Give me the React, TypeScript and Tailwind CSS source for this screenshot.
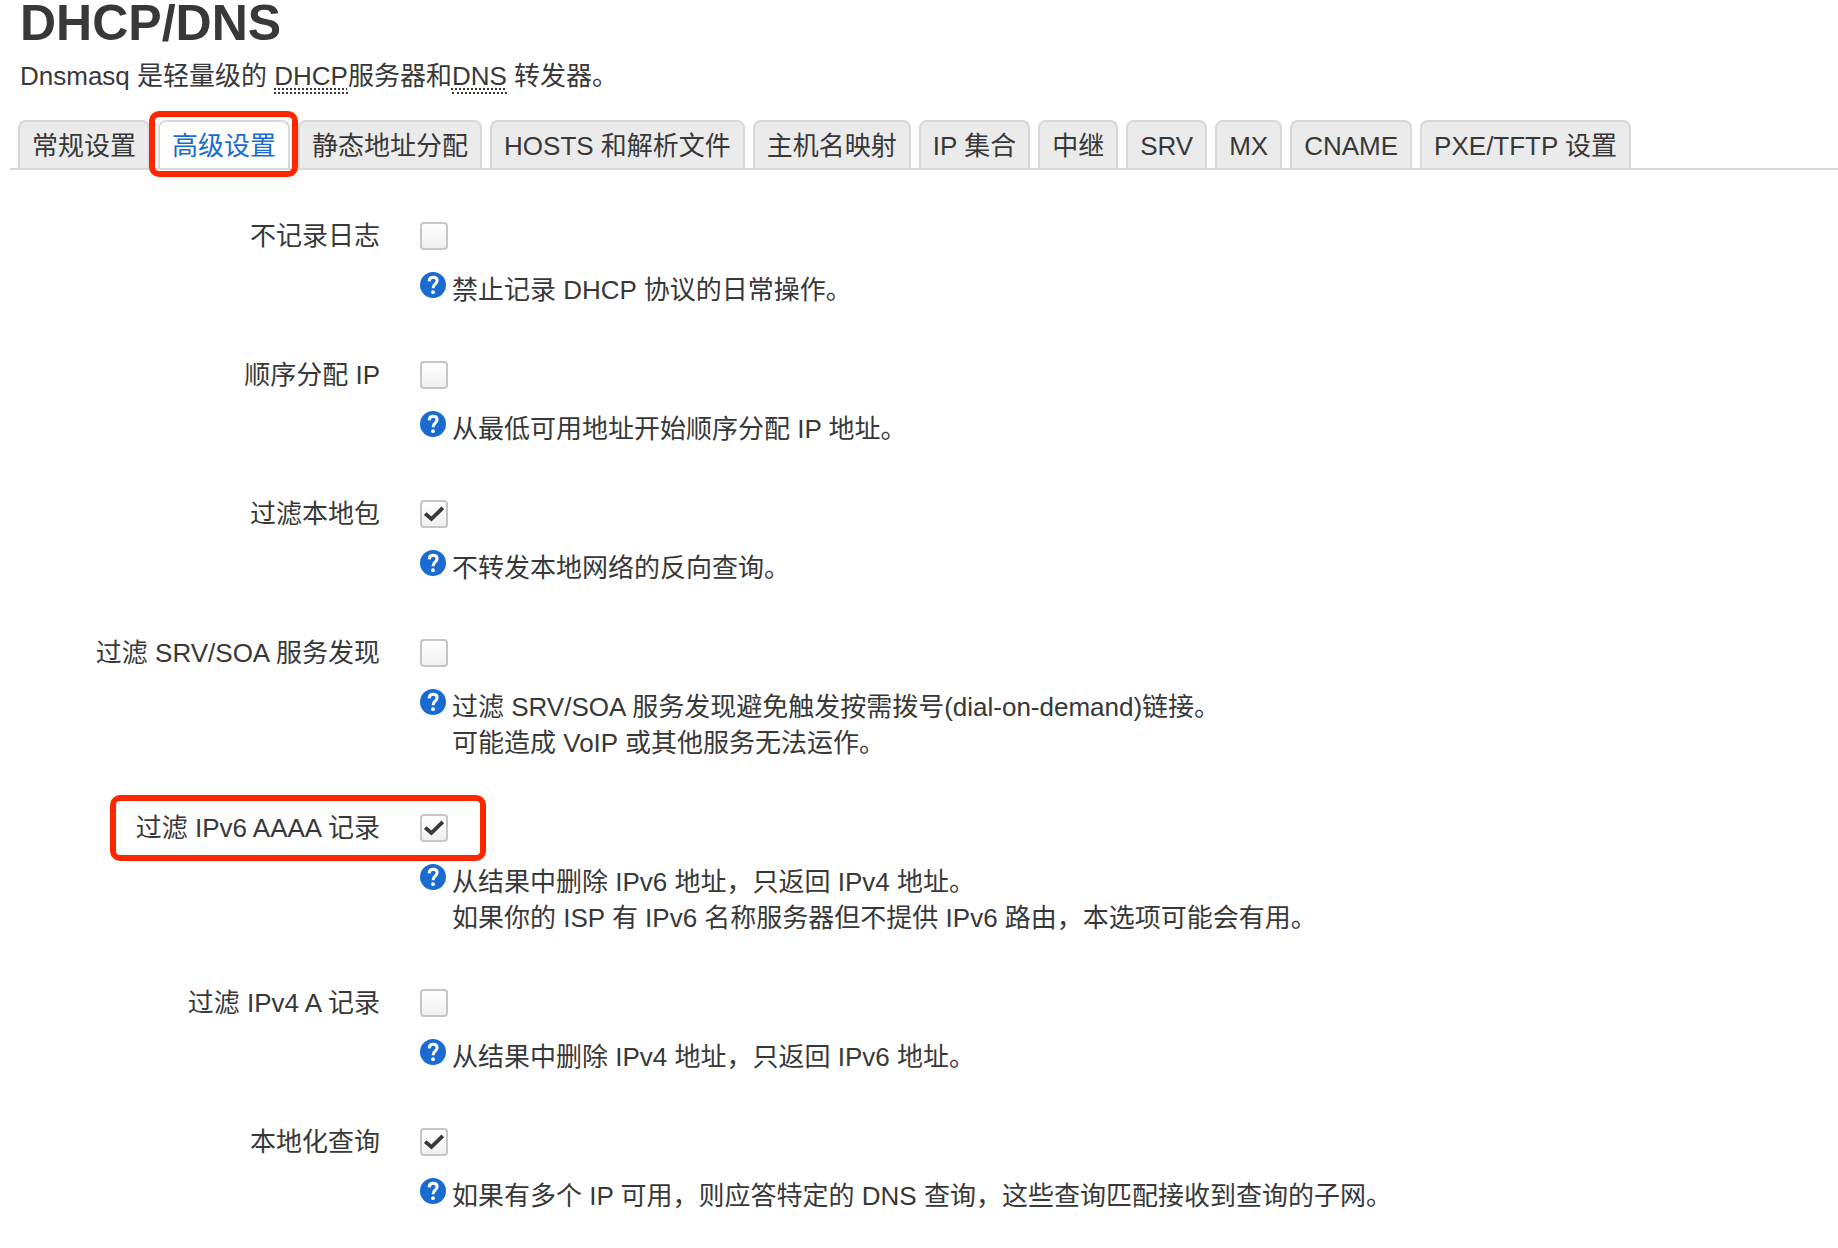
type Option = {
  id: string;
  label: string;
  help: string[];
  checked?: boolean;
  marked?: boolean;
};

const tabs = [
  "常规设置",
  "高级设置",
  "静态地址分配",
  "HOSTS 和解析文件",
  "主机名映射",
  "IP 集合",
  "中继",
  "SRV",
  "MX",
  "CNAME",
  "PXE/TFTP 设置",
];

const activeTab = "高级设置";

const options: Option[] = [
  { id: "quietdhcp", label: "不记录日志", help: ["禁止记录 DHCP 协议的日常操作。"] },
  { id: "sequential_ip", label: "顺序分配 IP", help: ["从最低可用地址开始顺序分配 IP 地址。"] },
  { id: "boguspriv", label: "过滤本地包", help: ["不转发本地网络的反向查询。"], checked: true },
  {
    id: "filterwin2k",
    label: "过滤 SRV/SOA 服务发现",
    help: ["过滤 SRV/SOA 服务发现避免触发按需拨号(dial-on-demand)链接。", "可能造成 VoIP 或其他服务无法运作。"],
  },
  {
    id: "filter_aaaa",
    label: "过滤 IPv6 AAAA 记录",
    help: [
      "从结果中删除 IPv6 地址，只返回 IPv4 地址。",
      "如果你的 ISP 有 IPv6 名称服务器但不提供 IPv6 路由，本选项可能会有用。",
    ],
    checked: true,
    marked: true,
  },
  { id: "filter_a", label: "过滤 IPv4 A 记录", help: ["从结果中删除 IPv4 地址，只返回 IPv6 地址。"] },
  {
    id: "localise_queries",
    label: "本地化查询",
    help: ["如果有多个 IP 可用，则应答特定的 DNS 查询，这些查询匹配接收到查询的子网。"],
    checked: true,
  },
];

const HelpIcon = () => (
  <svg className="size-[26px] shrink-0" viewBox="0 0 26 26" fill="none" aria-hidden="true">
    <circle cx="13" cy="13" r="13" fill="#1a6bd1" />
    <path
      d="M9.1 9.3C9.3 6.7 10.8 5.3 13.1 5.3c2.4 0 4 1.4 4 3.5 0 1.6-.8 2.4-2.1 3.5-1.3 1-1.9 1.8-1.9 4"
      stroke="#fff"
      strokeWidth="3"
    />
    <circle cx="13" cy="20.2" r="1.9" fill="#fff" />
  </svg>
);

const Checkbox = ({ id, checked }: { id: string; checked?: boolean }) => (
  <span className="relative size-7 shrink-0">
    <input
      id={id}
      type="checkbox"
      defaultChecked={checked}
      className="peer block size-7 appearance-none rounded-sm border-2 border-[#c6c6c6] bg-gradient-to-b from-white to-[#f0f0f0]"
    />
    <svg
      className="pointer-events-none absolute inset-0 hidden size-7 peer-checked:block"
      viewBox="0 0 28 28"
      fill="none"
      aria-hidden="true"
    >
      <path d="M5.2 13.6 11.4 19 22.8 7.8" stroke="#383838" strokeWidth="3.8" />
    </svg>
  </span>
);

const OptionRow = ({ option }: { option: Option }) => (
  <div>
    <div className="relative flex h-9 items-center gap-10">
      <label htmlFor={option.id} className="w-[380px] text-right">
        {option.label}
      </label>
      <Checkbox id={option.id} checked={option.checked} />
      {option.marked && (
        <span className="pointer-events-none absolute -top-[15px] left-[110px] h-[66px] w-[376px] rounded-[10px] border-6 border-[#ff2600]" />
      )}
    </div>
    <div className="mt-[18px] flex gap-[6px] pl-[420px]">
      <HelpIcon />
      <div>
        {option.help.map((line) => (
          <p key={line}>{line}</p>
        ))}
      </div>
    </div>
  </div>
);

const Abbr = ({ title, children }: { title: string; children: string }) => (
  <abbr
    title={title}
    className="border-b-2 border-dotted border-[#383838] pb-px underline decoration-dotted decoration-2 underline-offset-3"
  >
    {children}
  </abbr>
);

export default function App() {
  return (
    <main className="min-h-screen bg-white pb-9 font-['Liberation_Sans','Noto_Sans_CJK_SC',sans-serif] text-[26px] leading-9 text-[#383838]">
      <header className="px-5">
        <h1 className="text-[50px] leading-[46px] font-bold">DHCP/DNS</h1>
        <p className="mt-3">
          Dnsmasq 是轻量级的 <Abbr title="Dynamic Host Configuration Protocol">DHCP</Abbr>服务器和
          <Abbr title="Domain Name System">DNS</Abbr> 转发器。
        </p>
      </header>

      <nav className="mt-[26px] ml-[10px] border-b-2 border-[#d8d8d8] pl-2">
        <ul className="flex gap-2">
          {tabs.map((tab) => {
            const active = tab === activeTab;
            return (
              <li key={tab} className="relative">
                <a
                  href="#"
                  className={`block h-12 rounded-t-lg border-2 border-b-0 border-[#d8d8d8] px-3 pt-[6px] whitespace-nowrap ${
                    active ? "bg-white text-[#1a6bd1]" : "bg-[#ebebeb]"
                  }`}
                >
                  {tab}
                </a>
                {active && (
                  <span className="pointer-events-none absolute -top-[9px] -left-[9px] z-10 h-[66px] w-[149px] rounded-[10px] border-6 border-[#ff2600]" />
                )}
              </li>
            );
          })}
        </ul>
      </nav>

      <form className="mt-12 flex flex-col gap-[49px]">
        {options.map((option) => (
          <OptionRow key={option.id} option={option} />
        ))}
      </form>
    </main>
  );
}
